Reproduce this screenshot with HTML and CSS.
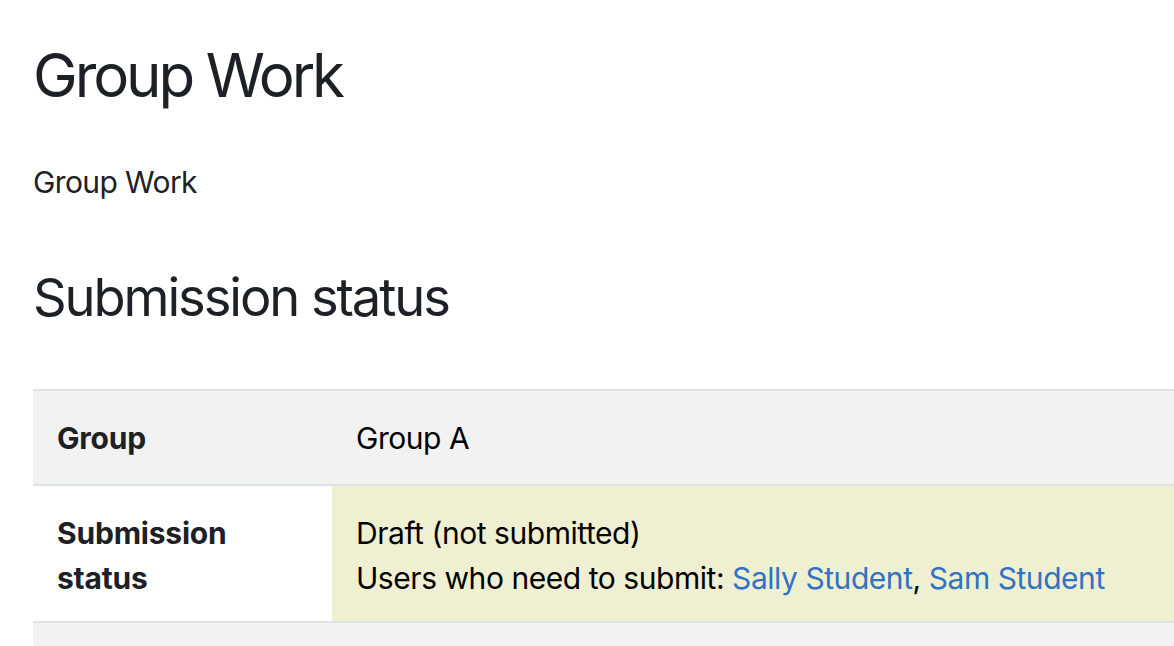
FILE: index.html
```html
<!DOCTYPE html>
<html>

<head>
    <meta charset="utf-8" />
    <title>Group Work</title>
    <link rel="stylesheet" href="styles.css">
</head>

<body>
    <div class="page">
        <h2 class="title">Group Work</h2>
        <div class="intro">Group Work</div>

        <h3 class="section-title">Submission status</h3>
        <table class="status-table">
            <tr class="stripe">
                <th>Group</th>
                <td>Group A</td>
            </tr>
            <tr class="status-row">
                <th>Submission status</th>
                <td class="draft">
                    Draft (not submitted)<br>
                    Users who need to submit: <a href="#">Sally Student</a>, <a href="#">Sam Student</a>
                </td>
            </tr>
            <tr class="stripe">
                <th>&nbsp;</th>
                <td>&nbsp;</td>
            </tr>
        </table>
    </div>
</body>

</html>
```

FILE: styles.css
```css
* {
    margin: 0;
    padding: 0;
    box-sizing: border-box;
}

html,
body {
    height: 100%;
    overflow: hidden;
}

body {
    background-color: #fff;
    color: #1d2125;
    font-family: Inter, "Liberation Sans", sans-serif;
    font-size: 30px;
    line-height: 1.5;
    letter-spacing: -0.45px;
}

.page {
    padding: 39px 0 0 33px;
}

.title {
    font-size: 60px;
    font-weight: 400;
    line-height: 1.2;
    letter-spacing: -3.1px;
}

.intro {
    margin-top: 49px;
    letter-spacing: -0.6px;
}

.section-title {
    margin-top: 61px;
    font-size: 52.5px;
    font-weight: 400;
    line-height: 1.2;
    letter-spacing: -2.1px;
}

.status-table {
    margin-top: 60px;
    width: 100%;
    border-collapse: collapse;
}

.status-table th,
.status-table td {
    padding: 25px 24px 23px;
    text-align: left;
    vertical-align: top;
    border-top: 2px solid #dee2e6;
}

.status-table th {
    width: 299px;
    font-weight: 700;
    letter-spacing: -0.2px;
}

.status-table td {
    color: #000;
}

.status-table .status-row th,
.status-table .status-row td {
    padding-top: 25px;
    padding-bottom: 20px;
}

.status-table .stripe th,
.status-table .stripe td {
    background-color: #f2f2f2;
}

.status-table td.draft {
    background-color: #eff0d1;
}

.status-table a {
    color: #3272c4;
    text-decoration: none;
}
```
